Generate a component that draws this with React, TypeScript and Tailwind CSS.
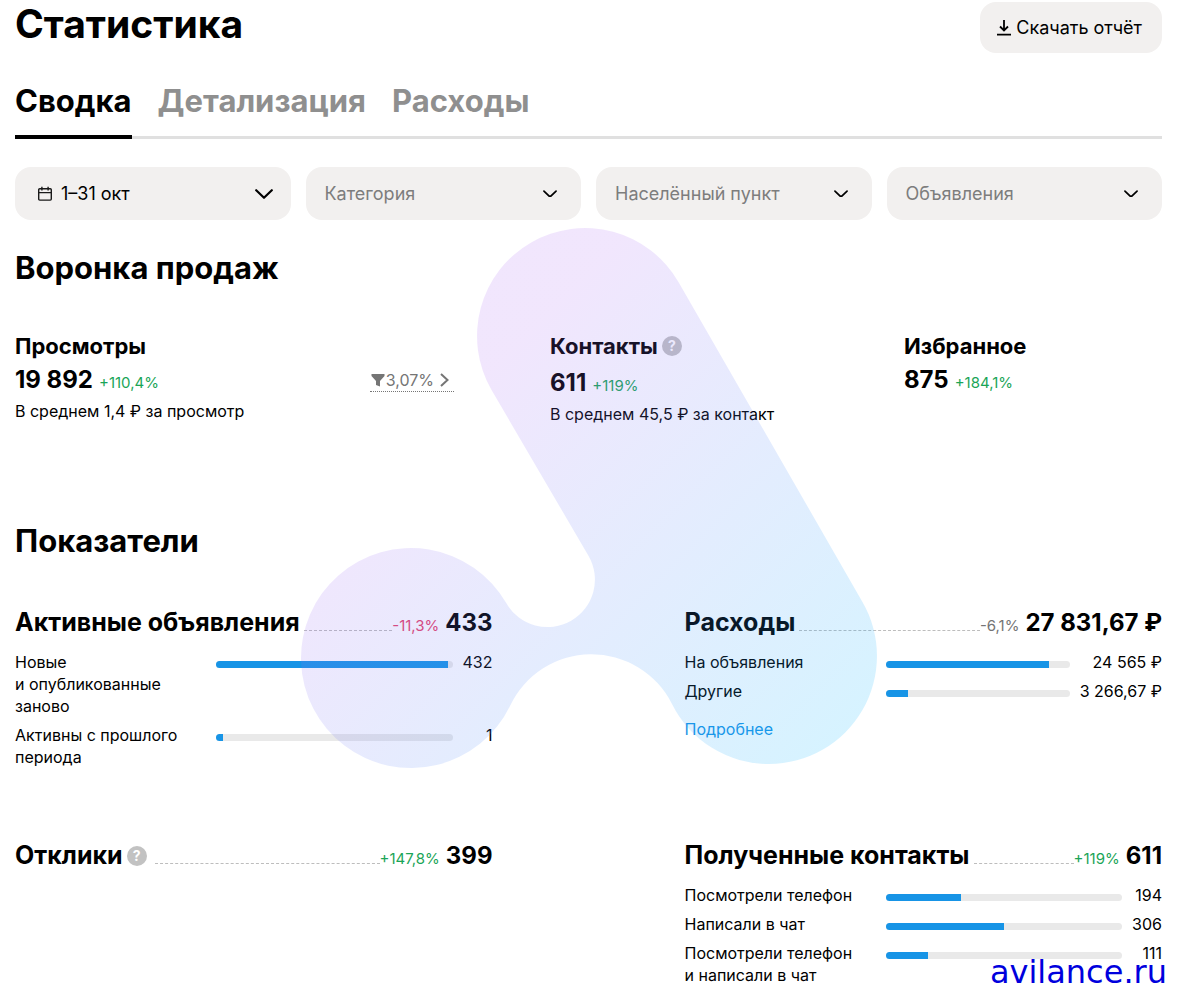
import type { ReactNode } from "react";

interface Row {
  label: string;
  value: string;
  percent: number;
}

interface MetricCardProps {
  title: string;
  total: string;
  change: string;
  changeClass: string;
  help?: boolean;
  rows?: Row[];
  children?: ReactNode;
}

const tabs = ["Сводка", "Детализация", "Расходы"];

const activeRows: Row[] = [
  { label: "Новые\nи опубликованные\nзаново", value: "432", percent: 98 },
  { label: "Активны с прошлого\nпериода", value: "1", percent: 3 },
];

const expenseRows: Row[] = [
  { label: "На объявления", value: "24 565 ₽", percent: 89 },
  { label: "Другие", value: "3 266,67 ₽", percent: 12 },
];

const contactRows: Row[] = [
  { label: "Посмотрели телефон", value: "194", percent: 32 },
  { label: "Написали в чат", value: "306", percent: 50 },
  {
    label: "Посмотрели телефон\nи написали в чат",
    value: "111",
    percent: 18,
  },
];

function HelpButton() {
  return (
    <button
      type="button"
      aria-label="Подсказка"
      className="flex size-5 shrink-0 items-center justify-center rounded-full bg-[#c2c2c2] text-sm font-bold text-white">
      ?
    </button>
  );
}

function CalendarIcon() {
  return (
    <svg
      viewBox="0 0 16 16"
      className="pointer-events-none absolute top-1/2 left-[22px] size-4 -translate-y-1/2"
      fill="none"
      stroke="#1a1a1a"
      strokeWidth="1.4">
      <rect x="1.7" y="2.7" width="12.6" height="11.4" rx="1" />
      <path d="M1.7 6.6h12.6M4.9 0.8v3.6M11.1 0.8v3.6" />
    </svg>
  );
}

function Filter({ name, icon }: { name: string; icon?: ReactNode }) {
  return (
    <div className="relative">
      {icon}
      <select
        aria-label={name}
        className={
          icon
            ? "h-[53px] w-full appearance-none rounded-2xl bg-[#f2f0ef] pr-12 pl-[46px] text-lg text-black"
            : "h-[53px] w-full appearance-none rounded-2xl bg-[#f2f0ef] pr-12 pl-[19px] text-lg text-[#7d7d7d]"
        }>
        <option>{name}</option>
      </select>
      <svg
        viewBox="0 0 18 10"
        className={
          icon
            ? "pointer-events-none absolute top-1/2 right-[18px] w-[18px] -translate-y-1/2"
            : "pointer-events-none absolute top-1/2 right-6 w-[14px] -translate-y-1/2"
        }
        fill="none"
        stroke="black"
        strokeWidth="2.2"
        strokeLinecap="round"
        strokeLinejoin="round">
        <path d="M1.2 1.2 9 8.8l7.8-7.6" />
      </svg>
    </div>
  );
}

function MetricCard({
  title,
  total,
  change,
  changeClass,
  help = false,
  rows = [],
  children,
}: MetricCardProps) {
  return (
    <article>
      <div className="flex items-baseline">
        <h3 className="text-[25px] leading-8 font-bold whitespace-nowrap">
          {title}
        </h3>
        {help && (
          <span className="ml-1 self-center pr-1">
            <HelpButton />
          </span>
        )}
        <span className="ml-1 flex-1 border-b border-dashed border-[#bdbdbd]" />
        <span className={changeClass}>{change}</span>
        <span className="ml-1.5 text-2xl leading-8 font-bold whitespace-nowrap">
          {total}
        </span>
      </div>
      <div className="mt-3 grid grid-cols-[201px_1fr_auto] gap-y-[7px] leading-[22px]">
        {rows.map((row) => (
          <div
            key={row.label}
            className="col-span-3 grid grid-cols-subgrid items-start">
            <span className="whitespace-pre-line">{row.label}</span>
            <span className="mt-[10px] h-[7px] overflow-hidden rounded-full bg-[#e9e9e9]">
              <span
                className="block h-full bg-[#1794e6]"
                style={{ width: `${row.percent}%` }}
              />
            </span>
            <span className="pl-[10px] text-right whitespace-nowrap">
              {row.value}
            </span>
          </div>
        ))}
      </div>
      {children}
    </article>
  );
}

function Watermark() {
  return (
    <svg
      viewBox="301 228 576 541"
      className="pointer-events-none absolute top-[228px] left-1/2 w-[576px] -translate-x-1/2"
      aria-hidden="true">
      <defs>
        <linearGradient
          id="mark"
          gradientUnits="userSpaceOnUse"
          x1="430"
          y1="430"
          x2="790"
          y2="790">
          <stop offset="0" stopColor="rgb(167,99,242)" />
          <stop offset="1" stopColor="rgb(0,180,255)" />
        </linearGradient>
      </defs>
      <path
        fill="url(#mark)"
        fillOpacity="0.16"
        d="M491.4 389.8A107 107 0 0 1 678.6 282.2L862.6 602.2A108 108 0 0 1 769 764A108 108 0 0 1 672 704A90 90 0 0 0 510 706A110 110 0 1 1 506.4 603.3A47 47 0 0 0 588.6 556Z"
      />
    </svg>
  );
}

export default function App() {
  return (
    <main className="relative bg-white px-[15px] pb-2 font-['Inter',sans-serif] text-base text-black">
      <header className="flex items-start justify-between pt-0.5">
        <h1 className="text-[39px] leading-11 font-bold">Статистика</h1>
        <button
          type="button"
          className="flex h-[51px] items-center gap-1 rounded-2xl bg-[#f2f0ef] pr-5 pl-4 text-lg">
          <svg
            viewBox="0 0 16 16"
            className="size-4"
            fill="none"
            stroke="black"
            strokeWidth="1.8">
            <path d="M8 0v10M4 6.5l4 4 4-4M1 14.6h14" />
          </svg>
          Скачать отчёт
        </button>
      </header>

      <nav className="mt-[25px] flex gap-[26px] border-b-[3px] border-[#e0e0e0]">
        {tabs.map((tab, index) => (
          <a
            key={tab}
            href="#"
            className={
              index === 0
                ? "-mb-[3px] border-b-4 border-black pb-[11px] text-[31px] leading-[46px] font-bold"
                : "text-[31px] leading-[46px] font-bold text-[#8f8f8f]"
            }>
            {tab}
          </a>
        ))}
      </nav>

      <div className="mt-7 grid grid-cols-4 gap-[15px]">
        <Filter name="1–31 окт" icon={<CalendarIcon />} />
        <Filter name="Категория" />
        <Filter name="Населённый пункт" />
        <Filter name="Объявления" />
      </div>

      <section className="mt-7">
        <h2 className="text-[31px] leading-10 font-bold">Воронка продаж</h2>
        <div className="mt-11 grid grid-cols-[535fr_354fr_258fr]">
          <div className="flex items-start justify-between">
            <div>
              <h3 className="text-[22px] leading-7 font-bold">Просмотры</h3>
              <p className="mt-1 flex items-baseline gap-1.5">
                <b className="text-2xl leading-8">19 892</b>
                <span className="text-[15px] text-[#1aa557]">+110,4%</span>
              </p>
              <p className="mt-1 leading-[22px]">В среднем 1,4 ₽ за просмотр</p>
            </div>
            <a
              href="#"
              className="mt-[37px] mr-24 flex items-center border-b border-dotted border-[#757575] leading-[22px] text-[#757575]">
              <svg viewBox="0 0 16 14" className="h-[14px] w-4" fill="#757575">
                <path d="M1.5 1h13v2L10 8v5.5L6 12V8L1.500 3z" />
              </svg>
              3,07%
              <svg
                viewBox="0 0 20 16"
                className="h-4 w-5"
                fill="none"
                stroke="#757575"
                strokeWidth="2">
                <path d="m7 2 6.500 6L7 14" />
              </svg>
            </a>
          </div>
          <div>
            <h3 className="flex items-center gap-1 text-[22px] leading-7 font-bold">
              Контакты
              <HelpButton />
            </h3>
            <p className="mt-[7px] flex items-baseline gap-1.5">
              <b className="text-2xl leading-8">611</b>
              <span className="text-[15px] text-[#1aa557]">+119%</span>
            </p>
            <p className="mt-1 leading-[22px]">В среднем 45,5 ₽ за контакт</p>
          </div>
          <div>
            <h3 className="text-[22px] leading-7 font-bold">Избранное</h3>
            <p className="mt-1 flex items-baseline gap-1.5">
              <b className="text-2xl leading-8">875</b>
              <span className="text-[15px] text-[#1aa557]">+184,1%</span>
            </p>
          </div>
        </div>
      </section>

      <section className="mt-24">
        <h2 className="text-[31px] leading-10 font-bold">Показатели</h2>
        <div className="mt-[45px] grid grid-cols-2 gap-x-48 gap-y-[71px]">
          <MetricCard
            title="Активные объявления"
            total="433"
            change="-11,3%"
            changeClass="text-[15px] text-[#e5446d]"
            rows={activeRows}
          />
          <MetricCard
            title="Расходы"
            total="27 831,67 ₽"
            change="-6,1%"
            changeClass="text-[15px] text-[#757575]"
            rows={expenseRows}>
            <a href="#" className="mt-4 block leading-[22px] text-[#1794e6]">
              Подробнее
            </a>
          </MetricCard>
          <MetricCard
            title="Отклики"
            total="399"
            change="+147,8%"
            changeClass="text-[15px] text-[#1aa557]"
            help
          />
          <MetricCard
            title="Полученные контакты"
            total="611"
            change="+119%"
            changeClass="text-[15px] text-[#1aa557]"
            rows={contactRows}
          />
        </div>
      </section>

      <Watermark />
      <p className="absolute right-[10px] bottom-0.5 font-['DejaVu_Sans',sans-serif] text-[32px] leading-10 text-[#0000dd]">
        avilance.ru
      </p>
    </main>
  );
}
